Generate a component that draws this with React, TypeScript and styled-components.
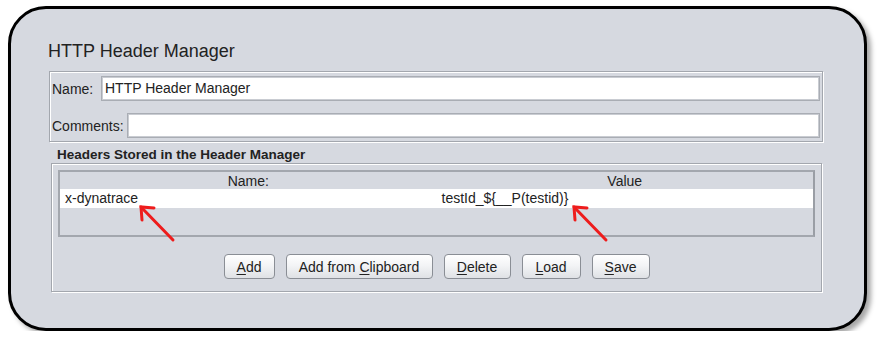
import React, { FC } from "react";
import styled, { createGlobalStyle } from "styled-components";

const GlobalStyle = createGlobalStyle`
  html, body {
    margin: 0;
    padding: 0;
    background: #ffffff;
  }
  body {
    font-family: "Liberation Sans", Arial, sans-serif;
    color: #222;
  }
`

const Card = styled.div`
  position: relative;
  box-sizing: border-box;
  width: 859px;
  height: 325px;
  margin: 6px 0 0 8px;
  border: 3px solid #000;
  border-radius: 38px;
  background: #d6d9e0;
  box-shadow: 4px 4px 5px rgba(0, 0, 0, 0.35);
  padding: 31px 42px 0 37px;
  display: flex;
  flex-direction: column;
`

const Title = styled.div`
  font-size: 18px;
  line-height: 22px;
  height: 22px;
  color: #222;
`

const Etched = styled.div`
  box-sizing: border-box;
  border: 1px solid #a3a7ae;
  box-shadow: inset 1px 1px 0 #fff, 1px 1px 0 #fff;
`

const FieldsPanel = styled(Etched)`
  margin: 9px 0 0 1px;
  width: 774px;
  height: 71px;
  padding: 4px 2px 0 2px;
  display: flex;
  flex-direction: column;
  gap: 12px;
`

const FieldRow = styled.div`
  display: flex;
  align-items: center;
  gap: 3px;
  height: 25px;
`

const Label = styled.label<{ $width: number }>`
  width: ${p => p.$width}px;
  font-size: 14px;
  flex: none;
`

const TextField = styled.div`
  flex: 1;
  box-sizing: border-box;
  height: 25px;
  background: #fff;
  border: 1px solid #a9adb4;
  box-shadow: inset 0 0 0 1px #c9ccd2;
  font-size: 14px;
  line-height: 23px;
  padding-left: 3px;
`

const SectionTitle = styled.div`
  margin: 5px 0 0 9px;
  font-size: 13.5px;
  font-weight: bold;
  line-height: 16px;
  height: 16px;
`

const HeadersPanel = styled(Etched)`
  margin: 0 0 0 3px;
  width: 771px;
  height: 129px;
  padding: 6px 6px 0 6px;
  display: flex;
  flex-direction: column;
`

const Table = styled.div`
  box-sizing: border-box;
  height: 67px;
  border: 2px solid #a3a7ae;
  border-right-color: #9a9ea5;
  display: flex;
  flex-direction: column;
`

const HeaderRow = styled.div`
  display: grid;
  grid-template-columns: 1fr 1fr;
  height: 17px;
  font-size: 14px;
  line-height: 18px;
  text-align: center;
`

const DataRow = styled.div`
  display: grid;
  grid-template-columns: 1fr 1fr;
  height: 19px;
  background: #fff;
  font-size: 14px;
  line-height: 19px;
`

const Cell = styled.div`
  padding-left: 5px;
  white-space: nowrap;
`

const ButtonBar = styled.div`
  display: flex;
  justify-content: center;
  gap: 11px;
  margin-top: 17px;
`

const Button = styled.button<{ $width: number }>`
  box-sizing: border-box;
  width: ${p => p.$width}px;
  height: 25px;
  padding: 0;
  border: 1px solid #8a8e95;
  border-radius: 4px;
  background: linear-gradient(#ffffff 0%, #f3f4f6 45%, #dfe1e5 100%);
  font-family: "Liberation Sans", Arial, sans-serif;
  font-size: 14px;
  color: #222;
  u {
    text-decoration-thickness: 1px;
    text-underline-offset: 2px;
  }
`

const Overlay = styled.svg`
  position: absolute;
  left: -11px;
  top: -9px;
  width: 885px;
  height: 351px;
  pointer-events: none;
`

const Arrow: FC<{ x: number; y: number }> = ({ x, y }) => (
  <g stroke="#ee1c1c" strokeWidth={3} strokeLinecap="round" fill="none">
    <line x1={x} y1={y} x2={x + 32} y2={y + 33} />
    <polyline points={`${x + 1},${y + 13} ${x},${y} ${x + 13},${y + 1}`} />
  </g>
)

const Btn: FC<{ width: number; pre?: string; mn: string; post: string }> = ({ width, pre, mn, post }) => (
  <Button type="button" $width={width}>
    {pre}<u>{mn}</u>{post}
  </Button>
)

export default function App() {
  return (
    <>
      <GlobalStyle />
      <Card>
        <Title>HTTP Header Manager</Title>
        <FieldsPanel>
          <FieldRow>
            <Label $width={46}>Name:</Label>
            <TextField>HTTP Header Manager</TextField>
          </FieldRow>
          <FieldRow>
            <Label $width={72}>Comments:</Label>
            <TextField />
          </FieldRow>
        </FieldsPanel>
        <SectionTitle>Headers Stored in the Header Manager</SectionTitle>
        <HeadersPanel>
          <Table>
            <HeaderRow>
              <div>Name:</div>
              <div>Value</div>
            </HeaderRow>
            <DataRow>
              <Cell>x-dynatrace</Cell>
              <Cell>testId_{"${__P(testid)}"}</Cell>
            </DataRow>
          </Table>
          <ButtonBar>
            <Btn width={51} mn="A" post="dd" />
            <Btn width={147} pre="Add from " mn="C" post="lipboard" />
            <Btn width={67} mn="D" post="elete" />
            <Btn width={59} mn="L" post="oad" />
            <Btn width={58} mn="S" post="ave" />
          </ButtonBar>
        </HeadersPanel>
        <Overlay viewBox="0 0 885 351">
          <Arrow x={141} y={207} />
          <Arrow x={574} y={207} />
        </Overlay>
      </Card>
    </>
  )
}
